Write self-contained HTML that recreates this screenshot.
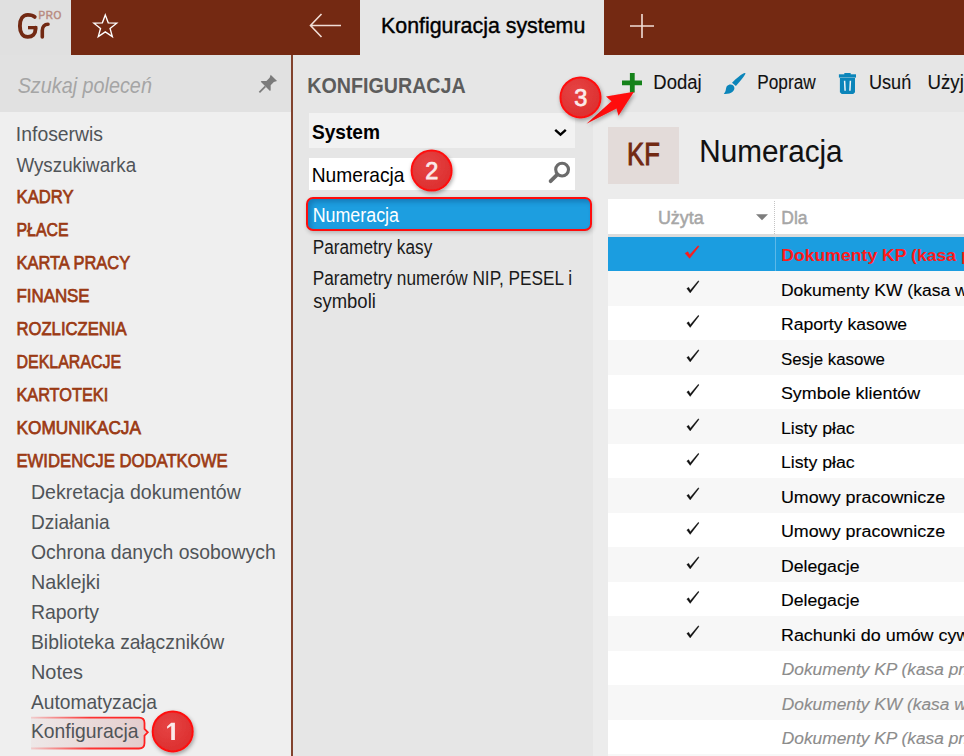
<!DOCTYPE html>
<html><head><meta charset="utf-8"><title>Konfiguracja systemu</title>
<style>
html,body{margin:0;padding:0;}
body{width:964px;height:756px;overflow:hidden;position:relative;background:#e6e6e6;font-family:"Liberation Sans",sans-serif;}
.b{position:absolute;}
.t{position:absolute;white-space:nowrap;}.t.r{-webkit-text-stroke:0.12px currentColor;}
.s{position:absolute;left:0;top:0;}
</style></head><body>
<div class="b" style="left:0px;top:0px;width:71px;height:55px;background:#e0e0e0;"></div><div class="b" style="left:71px;top:0px;width:893px;height:55px;background:#742912;"></div><div class="b" style="left:360px;top:0px;width:244px;height:55px;background:#e6e6e6;"></div><div class="b" style="left:0px;top:55px;width:291px;height:701px;background:#efefef;"></div><div class="b" style="left:0px;top:55px;width:291px;height:57px;background:#e1e1e1;"></div><div class="b" style="left:291px;top:55px;width:2px;height:701px;background:#82432e;"></div><div class="b" style="left:293px;top:55px;width:671px;height:701px;background:#e6e6e6;"></div><div class="b" style="left:593px;top:112px;width:371px;height:644px;background:#ececec;"></div><div class="b" style="left:309px;top:113px;width:266px;height:35px;background:#f2f2f2;"></div><div class="b" style="left:309px;top:158px;width:266px;height:32px;background:#ffffff;"></div><div class="b" style="left:305.8px;top:196.6px;width:282.2px;height:30.8px;border:2px solid #ff0d0d;border-radius:7px;background:#1d9ee0;box-shadow:inset 3px 3px 5px rgba(0,40,90,0.28),1px 2px 4px rgba(0,0,0,0.22)"></div><div class="b" style="left:608px;top:127px;width:71px;height:57px;background:#e3dbd9;"></div><div class="b" style="left:608px;top:199px;width:356px;height:35px;background:#ffffff;"></div><div class="b" style="left:608px;top:234px;width:356px;height:3px;background:#dcdcdc;"></div><div class="b" style="left:608px;top:236.50px;width:356px;height:34.5px;background:#1b9de0"></div><div class="b" style="left:608px;top:271.00px;width:356px;height:34.5px;background:#f7f7f7"></div><div class="b" style="left:608px;top:305.50px;width:356px;height:34.5px;background:#ffffff"></div><div class="b" style="left:608px;top:340.00px;width:356px;height:34.5px;background:#f7f7f7"></div><div class="b" style="left:608px;top:374.50px;width:356px;height:34.5px;background:#ffffff"></div><div class="b" style="left:608px;top:409.00px;width:356px;height:34.5px;background:#f7f7f7"></div><div class="b" style="left:608px;top:443.50px;width:356px;height:34.5px;background:#ffffff"></div><div class="b" style="left:608px;top:478.00px;width:356px;height:34.5px;background:#f7f7f7"></div><div class="b" style="left:608px;top:512.50px;width:356px;height:34.5px;background:#ffffff"></div><div class="b" style="left:608px;top:547.00px;width:356px;height:34.5px;background:#f7f7f7"></div><div class="b" style="left:608px;top:581.50px;width:356px;height:34.5px;background:#ffffff"></div><div class="b" style="left:608px;top:616.00px;width:356px;height:34.5px;background:#f7f7f7"></div><div class="b" style="left:608px;top:650.50px;width:356px;height:34.5px;background:#ffffff"></div><div class="b" style="left:608px;top:685.00px;width:356px;height:34.5px;background:#f7f7f7"></div><div class="b" style="left:608px;top:719.50px;width:356px;height:34.5px;background:#ffffff"></div><div class="b" style="left:608px;top:754px;width:356px;height:2px;background:#f7f7f7;"></div><div class="b" style="left:774px;top:201px;width:0;height:33px;border-left:1px dotted #c4c4c4"></div><div class="b" style="left:775px;top:237px;width:1px;height:34px;background:#5cb8e8;"></div>
<svg class="s" width="964" height="756" viewBox="0 0 964 756"><defs><linearGradient id="hl" x1="0" x2="1"><stop offset="0" stop-color="#ff2020" stop-opacity="0.15"/><stop offset="0.5" stop-color="#ff2020" stop-opacity="0.9"/><stop offset="1" stop-color="#ff2020"/></linearGradient><linearGradient id="hlf" x1="0" x2="1"><stop offset="0" stop-color="#e8caca" stop-opacity="0.2"/><stop offset="1" stop-color="#e2c8c8" stop-opacity="0.9"/></linearGradient><radialGradient id="cg" cx="0.4" cy="0.35" r="0.7"><stop offset="0" stop-color="#e64444"/><stop offset="1" stop-color="#dc2e2e"/></radialGradient><filter id="sh" x="-30%" y="-30%" width="160%" height="160%"><feGaussianBlur in="SourceAlpha" stdDeviation="2.2"/><feOffset dx="1" dy="2" result="o"/><feComponentTransfer><feFuncA type="linear" slope="0.35"/></feComponentTransfer><feMerge><feMergeNode/><feMergeNode in="SourceGraphic"/></feMerge></filter></defs><path d="M34.7 16.9 C33.2 15.5 30.9 14.9 27.8 14.9 C22.8 14.9 19.9 19.3 19.9 25.9 C19.9 32.5 22.8 36.9 27.8 36.9 C32.6 36.9 35.4 33.8 35.4 29.8 V27.8" fill="none" stroke="#722913" stroke-width="3.9" stroke-linecap="round" stroke-linejoin="round"/><rect x="28" y="26" width="9.3" height="3.3" fill="#722913"/><path d="M42.3 36.9 V30.6 C42.3 26.5 44.6 24.2 48 24.2" fill="none" stroke="#722913" stroke-width="3.6" stroke-linecap="round" stroke-linejoin="round"/><text x="38.6" y="18.8" font-family="Liberation Sans" font-size="10" fill="#b98b80" stroke="#b98b80" stroke-width="0.45" letter-spacing="0.5">PRO</text><polygon points="105.30,14.90 108.24,22.85 116.71,23.19 110.06,28.45 112.35,36.61 105.30,31.90 98.25,36.61 100.54,28.45 93.89,23.19 102.36,22.85" fill="none" stroke="#fff" stroke-width="1.35" stroke-linejoin="miter"/><path d="M310.5 25.5 H341 M321.5 14 L310.5 25.5 L321.5 37" fill="none" stroke="#f1ddd6" stroke-width="1.6"/><path d="M630 26 H654 M642 14 V38" fill="none" stroke="#f1ddd6" stroke-width="1.6"/><g fill="#7b7b7b" transform="translate(267.5,84.2) rotate(45)"><path d="M-4.5 -9 H4.5 L3 -6 L3 -1.5 L6.5 2 V3 H-6.5 V2 L-3 -1.5 L-3 -6 Z"/><rect x="-0.9" y="3" width="1.8" height="8.5"/></g><path d="M555.2 129.8 L560.5 134.6 L565.8 129.8" fill="none" stroke="#000" stroke-width="2.4"/><circle cx="562.1" cy="169.6" r="6.4" fill="none" stroke="#6b6b6b" stroke-width="3.1"/><path d="M557.2 174.6 L550.6 181.2" stroke="#6b6b6b" stroke-width="3.8" stroke-linecap="round"/><path d="M622 82.8 H642 M632.3 73 V92.5" fill="none" stroke="#15821a" stroke-width="4.8"/><g fill="#0b85ba"><path d="M745.3 73.1 C746.3 74.3 740.3 81 735.9 85.9 L732 82.7 C736 78.4 743.8 72 745.3 73.1 Z"/><path d="M723.8 93.9 C726.6 91.2 725.5 88 727 86.1 C728.5 84.1 731.6 83.8 733.3 85.5 C735.1 87.3 734.7 90.1 732.6 91.8 C730.4 93.5 727.4 94.1 723.8 93.9 Z"/></g><g fill="#0b85ba"><rect x="844.3" y="72.9" width="6.4" height="2" rx="0.5"/><rect x="838.9" y="74.3" width="17.1" height="3.3"/><path d="M839.9 78.1 H855 V92.2 L853.2 94.1 H841.7 L839.9 92.2 Z"/></g><path d="M844.6 80.7 L845.1 90.8 M850.4 80.7 L849.9 90.8" stroke="#eef4f7" stroke-width="1.5"/><path d="M756 214.2 H768 L762 220.3 Z" fill="#7d7d7d"/><path d="M685.2 253.30 L687.8 251.80 L689.7 254.90 L698.0 245.80 L698.9 246.50 L689.6 258.30 Z" fill="#ff1a1a" stroke="#ff1a1a" stroke-width="0.6" stroke-linejoin="round"/><path d="M686.8 288.50 L688.7 287.30 L690.3 290.20 L698.3 280.80 L699.0 281.40 L690.2 292.90 Z" fill="#111" stroke="#111" stroke-width="0.35" stroke-linejoin="round"/><path d="M686.8 323.00 L688.7 321.80 L690.3 324.70 L698.3 315.30 L699.0 315.90 L690.2 327.40 Z" fill="#111" stroke="#111" stroke-width="0.35" stroke-linejoin="round"/><path d="M686.8 357.50 L688.7 356.30 L690.3 359.20 L698.3 349.80 L699.0 350.40 L690.2 361.90 Z" fill="#111" stroke="#111" stroke-width="0.35" stroke-linejoin="round"/><path d="M686.8 392.00 L688.7 390.80 L690.3 393.70 L698.3 384.30 L699.0 384.90 L690.2 396.40 Z" fill="#111" stroke="#111" stroke-width="0.35" stroke-linejoin="round"/><path d="M686.8 426.50 L688.7 425.30 L690.3 428.20 L698.3 418.80 L699.0 419.40 L690.2 430.90 Z" fill="#111" stroke="#111" stroke-width="0.35" stroke-linejoin="round"/><path d="M686.8 461.00 L688.7 459.80 L690.3 462.70 L698.3 453.30 L699.0 453.90 L690.2 465.40 Z" fill="#111" stroke="#111" stroke-width="0.35" stroke-linejoin="round"/><path d="M686.8 495.50 L688.7 494.30 L690.3 497.20 L698.3 487.80 L699.0 488.40 L690.2 499.90 Z" fill="#111" stroke="#111" stroke-width="0.35" stroke-linejoin="round"/><path d="M686.8 530.00 L688.7 528.80 L690.3 531.70 L698.3 522.30 L699.0 522.90 L690.2 534.40 Z" fill="#111" stroke="#111" stroke-width="0.35" stroke-linejoin="round"/><path d="M686.8 564.50 L688.7 563.30 L690.3 566.20 L698.3 556.80 L699.0 557.40 L690.2 568.90 Z" fill="#111" stroke="#111" stroke-width="0.35" stroke-linejoin="round"/><path d="M686.8 599.00 L688.7 597.80 L690.3 600.70 L698.3 591.30 L699.0 591.90 L690.2 603.40 Z" fill="#111" stroke="#111" stroke-width="0.35" stroke-linejoin="round"/><path d="M686.8 633.50 L688.7 632.30 L690.3 635.20 L698.3 625.80 L699.0 626.40 L690.2 637.90 Z" fill="#111" stroke="#111" stroke-width="0.35" stroke-linejoin="round"/><path d="M31 717.6 H139 Q144.5 717.6 144.5 723.1 V729 L147.8 732.3 L144.5 735.6 V743 Q144.5 748.5 139 748.5 H31" fill="url(#hlf)" stroke="url(#hl)" stroke-width="1.8"/></svg>
<div class="t" id="tab" style="left:381px;top:14.89px;font-size:22.09px;line-height:22.09px;font-weight:400;font-style:normal;color:#000;transform:translateX(0.002px) scaleX(0.9678);transform-origin:0 0;-webkit-text-stroke:0.4px currentColor;">Konfiguracja systemu</div>
<div class="t" id="szukaj" style="left:17px;top:75.25px;font-size:22.38px;line-height:22.38px;font-weight:400;font-style:italic;color:#a5a5a5;transform:translateX(0.673px) scaleX(0.8844);transform-origin:0 0;">Szukaj poleceń</div>
<div class="t" id="info" style="left:15px;top:124.12px;font-size:20.64px;line-height:20.64px;font-weight:400;font-style:normal;color:#505458;transform:translateX(0.837px) scaleX(0.9393);transform-origin:0 0;">Infoserwis</div>
<div class="t" id="wysz" style="left:16px;top:154.16px;font-size:21.08px;line-height:21.08px;font-weight:400;font-style:normal;color:#505458;transform:translateX(0.419px) scaleX(0.8905);transform-origin:0 0;">Wyszukiwarka</div>
<div class="t" id="sec0" style="left:16px;top:187.36px;font-size:19.19px;line-height:19.19px;font-weight:400;font-style:normal;color:#9b3a14;transform:translateX(0.550px) scaleX(0.8656);transform-origin:0 0;-webkit-text-stroke:0.75px currentColor;">KADRY</div>
<div class="t" id="sec1" style="left:16px;top:220.36px;font-size:19.19px;line-height:19.19px;font-weight:400;font-style:normal;color:#9b3a14;transform:translateX(0.517px) scaleX(0.8257);transform-origin:0 0;-webkit-text-stroke:0.75px currentColor;">PŁACE</div>
<div class="t" id="sec2" style="left:16px;top:253.36px;font-size:19.19px;line-height:19.19px;font-weight:400;font-style:normal;color:#9b3a14;transform:translateX(0.447px) scaleX(0.8576);transform-origin:0 0;-webkit-text-stroke:0.75px currentColor;">KARTA PRACY</div>
<div class="t" id="sec3" style="left:16px;top:286.36px;font-size:19.19px;line-height:19.19px;font-weight:400;font-style:normal;color:#9b3a14;transform:translateX(0.407px) scaleX(0.8807);transform-origin:0 0;-webkit-text-stroke:0.75px currentColor;">FINANSE</div>
<div class="t" id="sec4" style="left:16px;top:319.36px;font-size:19.19px;line-height:19.19px;font-weight:400;font-style:normal;color:#9b3a14;transform:translateX(0.477px) scaleX(0.8677);transform-origin:0 0;-webkit-text-stroke:0.75px currentColor;">ROZLICZENIA</div>
<div class="t" id="sec5" style="left:16px;top:352.36px;font-size:19.19px;line-height:19.19px;font-weight:400;font-style:normal;color:#9b3a14;transform:translateX(0.519px) scaleX(0.8319);transform-origin:0 0;-webkit-text-stroke:0.75px currentColor;">DEKLARACJE</div>
<div class="t" id="sec6" style="left:16px;top:385.36px;font-size:19.19px;line-height:19.19px;font-weight:400;font-style:normal;color:#9b3a14;transform:translateX(0.376px) scaleX(0.8498);transform-origin:0 0;-webkit-text-stroke:0.75px currentColor;">KARTOTEKI</div>
<div class="t" id="sec7" style="left:16px;top:418.36px;font-size:19.19px;line-height:19.19px;font-weight:400;font-style:normal;color:#9b3a14;transform:translateX(0.523px) scaleX(0.8978);transform-origin:0 0;-webkit-text-stroke:0.75px currentColor;">KOMUNIKACJA</div>
<div class="t" id="sec8" style="left:16px;top:451.36px;font-size:19.19px;line-height:19.19px;font-weight:400;font-style:normal;color:#9b3a14;transform:translateX(0.477px) scaleX(0.8698);transform-origin:0 0;-webkit-text-stroke:0.75px currentColor;">EWIDENCJE DODATKOWE</div>
<div class="t" id="sub0" style="left:30px;top:482.12px;font-size:20.64px;line-height:20.64px;font-weight:400;font-style:normal;color:#505458;transform:translateX(0.980px) scaleX(0.9485);transform-origin:0 0;">Dekretacja dokumentów</div>
<div class="t" id="sub1" style="left:30px;top:512.12px;font-size:20.64px;line-height:20.64px;font-weight:400;font-style:normal;color:#505458;transform:translateX(0.980px) scaleX(0.9261);transform-origin:0 0;">Działania</div>
<div class="t" id="sub2" style="left:30px;top:542.12px;font-size:20.64px;line-height:20.64px;font-weight:400;font-style:normal;color:#505458;transform:translateX(0.980px) scaleX(0.9405);transform-origin:0 0;">Ochrona danych osobowych</div>
<div class="t" id="sub3" style="left:30px;top:572.12px;font-size:20.64px;line-height:20.64px;font-weight:400;font-style:normal;color:#505458;transform:translateX(0.980px) scaleX(0.9573);transform-origin:0 0;">Naklejki</div>
<div class="t" id="sub4" style="left:30px;top:602.12px;font-size:20.64px;line-height:20.64px;font-weight:400;font-style:normal;color:#505458;transform:translateX(0.980px) scaleX(0.9419);transform-origin:0 0;">Raporty</div>
<div class="t" id="sub5" style="left:30px;top:632.12px;font-size:20.64px;line-height:20.64px;font-weight:400;font-style:normal;color:#505458;transform:translateX(0.980px) scaleX(0.9370);transform-origin:0 0;">Biblioteka załączników</div>
<div class="t" id="sub6" style="left:30px;top:662.12px;font-size:20.64px;line-height:20.64px;font-weight:400;font-style:normal;color:#505458;transform:translateX(0.980px) scaleX(0.9644);transform-origin:0 0;">Notes</div>
<div class="t" id="sub7" style="left:30px;top:692.12px;font-size:20.64px;line-height:20.64px;font-weight:400;font-style:normal;color:#505458;transform:translateX(0.980px) scaleX(0.9304);transform-origin:0 0;">Automatyzacja</div>
<div class="t" id="sub8" style="left:30px;top:721.12px;font-size:20.64px;line-height:20.64px;font-weight:400;font-style:normal;color:#505458;transform:translateX(0.980px) scaleX(0.9371);transform-origin:0 0;">Konfiguracja</div>
<div class="t" id="konf" style="left:307px;top:74.54px;font-size:21.80px;line-height:21.80px;font-weight:700;font-style:normal;color:#5c5c5c;transform:translateX(0.289px) scaleX(0.9020);transform-origin:0 0;">KONFIGURACJA</div>
<div class="t" id="system" style="left:311px;top:122.12px;font-size:20.64px;line-height:20.64px;font-weight:700;font-style:normal;color:#000;transform:translateX(0.888px) scaleX(0.9283);transform-origin:0 0;">System</div>
<div class="t" id="numq" style="left:311px;top:165.12px;font-size:20.64px;line-height:20.64px;font-weight:400;font-style:normal;color:#000;transform:translateX(0.777px) scaleX(0.9296);transform-origin:0 0;">Numeracja</div>
<div class="t" id="numsel" style="left:312px;top:206.06px;font-size:19.77px;line-height:19.77px;font-weight:400;font-style:normal;color:#fff;transform:translateX(0.666px) scaleX(0.9036);transform-origin:0 0;">Numeracja</div>
<div class="t" id="pk" style="left:312px;top:237.74px;font-size:19.91px;line-height:19.91px;font-weight:400;font-style:normal;color:#1a1a1a;transform:translateX(0.695px) scaleX(0.8647);transform-origin:0 0;">Parametry kasy</div>
<div class="t" id="pn" style="left:312px;top:268.74px;font-size:19.91px;line-height:19.91px;font-weight:400;font-style:normal;color:#1a1a1a;transform:translateX(0.655px) scaleX(0.8649);transform-origin:0 0;">Parametry numerów NIP, PESEL i</div>
<div class="t" id="sym" style="left:313px;top:292.24px;font-size:19.91px;line-height:19.91px;font-weight:400;font-style:normal;color:#1a1a1a;transform:translateX(0.159px) scaleX(0.9291);transform-origin:0 0;">symboli</div>
<div class="t r" id="dodaj" style="left:653px;top:73.06px;font-size:19.77px;line-height:19.77px;font-weight:400;font-style:normal;color:#111;transform:translateX(0.373px) scaleX(0.9347);transform-origin:0 0;">Dodaj</div>
<div class="t r" id="popraw" style="left:757px;top:73.06px;font-size:19.77px;line-height:19.77px;font-weight:400;font-style:normal;color:#111;transform:translateX(0.295px) scaleX(0.8719);transform-origin:0 0;">Popraw</div>
<div class="t r" id="usun" style="left:868px;top:73.06px;font-size:19.77px;line-height:19.77px;font-weight:400;font-style:normal;color:#111;transform:translateX(0.974px) scaleX(0.9161);transform-origin:0 0;">Usuń</div>
<div class="t r" id="uzyj" style="left:927px;top:73.06px;font-size:19.77px;line-height:19.77px;font-weight:400;font-style:normal;color:#111;transform:translateX(0.470px) scaleX(0.9447);transform-origin:0 0;">Użyj</div>
<div class="t" id="kf" style="left:627px;top:140.11px;font-size:30.81px;line-height:30.81px;font-weight:400;font-style:normal;color:#722913;transform:translateX(0.057px) scaleX(0.8314);transform-origin:0 0;-webkit-text-stroke:0.95px currentColor;">KF</div>
<div class="t r" id="title" style="left:699px;top:135.57px;font-size:31.69px;line-height:31.69px;font-weight:400;font-style:normal;color:#111;transform:translateX(0.314px) scaleX(0.9352);transform-origin:0 0;">Numeracja</div>
<div class="t" id="uzyta" style="left:657px;top:209.32px;font-size:18.46px;line-height:18.46px;font-weight:400;font-style:normal;color:#a6a6a6;transform:translateX(0.896px) scaleX(0.9729);transform-origin:0 0;-webkit-text-stroke:0.5px currentColor;">Użyta</div>
<div class="t" id="dla" style="left:781px;top:209.32px;font-size:18.46px;line-height:18.46px;font-weight:400;font-style:normal;color:#a6a6a6;transform:translateX(0.267px) scaleX(0.9486);transform-origin:0 0;-webkit-text-stroke:0.5px currentColor;">Dla</div>
<div class="t" id="row0" style="left:781px;top:247.17px;font-size:17.40px;line-height:17.40px;font-weight:700;font-style:normal;color:#ff1a1a;transform:translateX(0.369px) scaleX(1.0117);transform-origin:0 0;">Dokumenty KP (kasa przyjmie)</div>
<div class="t r" id="row1" style="left:780px;top:281.75px;font-size:17.30px;line-height:17.30px;font-weight:400;font-style:normal;color:#000;transform:translateX(0.920px) scaleX(1.0126);transform-origin:0 0;">Dokumenty KW (kasa wyda)</div>
<div class="t r" id="row2" style="left:780px;top:316.25px;font-size:17.30px;line-height:17.30px;font-weight:400;font-style:normal;color:#000;transform:translateX(0.920px) scaleX(1.0188);transform-origin:0 0;">Raporty kasowe</div>
<div class="t r" id="row3" style="left:780px;top:350.75px;font-size:17.30px;line-height:17.30px;font-weight:400;font-style:normal;color:#000;transform:translateX(0.920px) scaleX(0.9761);transform-origin:0 0;">Sesje kasowe</div>
<div class="t r" id="row4" style="left:780px;top:385.25px;font-size:17.30px;line-height:17.30px;font-weight:400;font-style:normal;color:#000;transform:translateX(0.920px) scaleX(1.0362);transform-origin:0 0;">Symbole klientów</div>
<div class="t r" id="row5" style="left:780px;top:419.75px;font-size:17.30px;line-height:17.30px;font-weight:400;font-style:normal;color:#000;transform:translateX(0.920px) scaleX(1.0240);transform-origin:0 0;">Listy płac</div>
<div class="t r" id="row6" style="left:780px;top:454.25px;font-size:17.30px;line-height:17.30px;font-weight:400;font-style:normal;color:#000;transform:translateX(0.920px) scaleX(1.0240);transform-origin:0 0;">Listy płac</div>
<div class="t r" id="row7" style="left:780px;top:488.75px;font-size:17.30px;line-height:17.30px;font-weight:400;font-style:normal;color:#000;transform:translateX(0.920px) scaleX(1.0364);transform-origin:0 0;">Umowy pracownicze</div>
<div class="t r" id="row8" style="left:780px;top:523.25px;font-size:17.30px;line-height:17.30px;font-weight:400;font-style:normal;color:#000;transform:translateX(0.920px) scaleX(1.0364);transform-origin:0 0;">Umowy pracownicze</div>
<div class="t r" id="row9" style="left:780px;top:557.75px;font-size:17.30px;line-height:17.30px;font-weight:400;font-style:normal;color:#000;transform:translateX(0.920px) scaleX(1.0225);transform-origin:0 0;">Delegacje</div>
<div class="t r" id="row10" style="left:780px;top:592.25px;font-size:17.30px;line-height:17.30px;font-weight:400;font-style:normal;color:#000;transform:translateX(0.920px) scaleX(1.0225);transform-origin:0 0;">Delegacje</div>
<div class="t r" id="row11" style="left:780px;top:626.75px;font-size:17.30px;line-height:17.30px;font-weight:400;font-style:normal;color:#000;transform:translateX(0.920px) scaleX(1.0388);transform-origin:0 0;">Rachunki do umów cywilnoprawnych</div>
<div class="t r" id="row12" style="left:781px;top:661.22px;font-size:17.30px;line-height:17.30px;font-weight:400;font-style:italic;color:#8c8c8c;transform:translateX(0.790px) scaleX(1.0025);transform-origin:0 0;">Dokumenty KP (kasa przyjmie)</div>
<div class="t r" id="row13" style="left:781px;top:695.71px;font-size:17.30px;line-height:17.30px;font-weight:400;font-style:italic;color:#8c8c8c;transform:translateX(0.790px) scaleX(1.0032);transform-origin:0 0;">Dokumenty KW (kasa wyda)</div>
<div class="t r" id="row14" style="left:781px;top:730.22px;font-size:17.30px;line-height:17.30px;font-weight:400;font-style:italic;color:#8c8c8c;transform:translateX(0.790px) scaleX(1.0025);transform-origin:0 0;">Dokumenty KP (kasa przyjmie)</div>
<svg class="s" width="964" height="756" viewBox="0 0 964 756"><g filter="url(#sh)"><path d="M586.5 123.8 L611.5 101.2 L606 96.4 L634 91.8 L618.5 115.8 L616.5 108.6 Z" fill="#ff0a0a"/></g><g filter="url(#sh)"><circle cx="431.6" cy="170.6" r="20" fill="url(#cg)" stroke="#ff1010" stroke-width="2"/></g><text x="431.90000000000003" y="179.2" text-anchor="middle" font-family="Liberation Sans" font-size="23.5" fill="#fbeaea" stroke="#fbeaea" stroke-width="0.75">2</text><g filter="url(#sh)"><circle cx="580.5" cy="97.4" r="20" fill="url(#cg)" stroke="#ff1010" stroke-width="2"/></g><text x="580.8" y="106.0" text-anchor="middle" font-family="Liberation Sans" font-size="23.5" fill="#fbeaea" stroke="#fbeaea" stroke-width="0.75">3</text><g filter="url(#sh)"><circle cx="172.7" cy="731.4" r="20" fill="url(#cg)" stroke="#ff1010" stroke-width="2"/></g><path d="M171.2 722.8 H174.89999999999998 V740.1 H171.2 V726.0 L167.1 728.8 V726.4 Z" fill="#fbeaea"/></svg>
</body></html>
